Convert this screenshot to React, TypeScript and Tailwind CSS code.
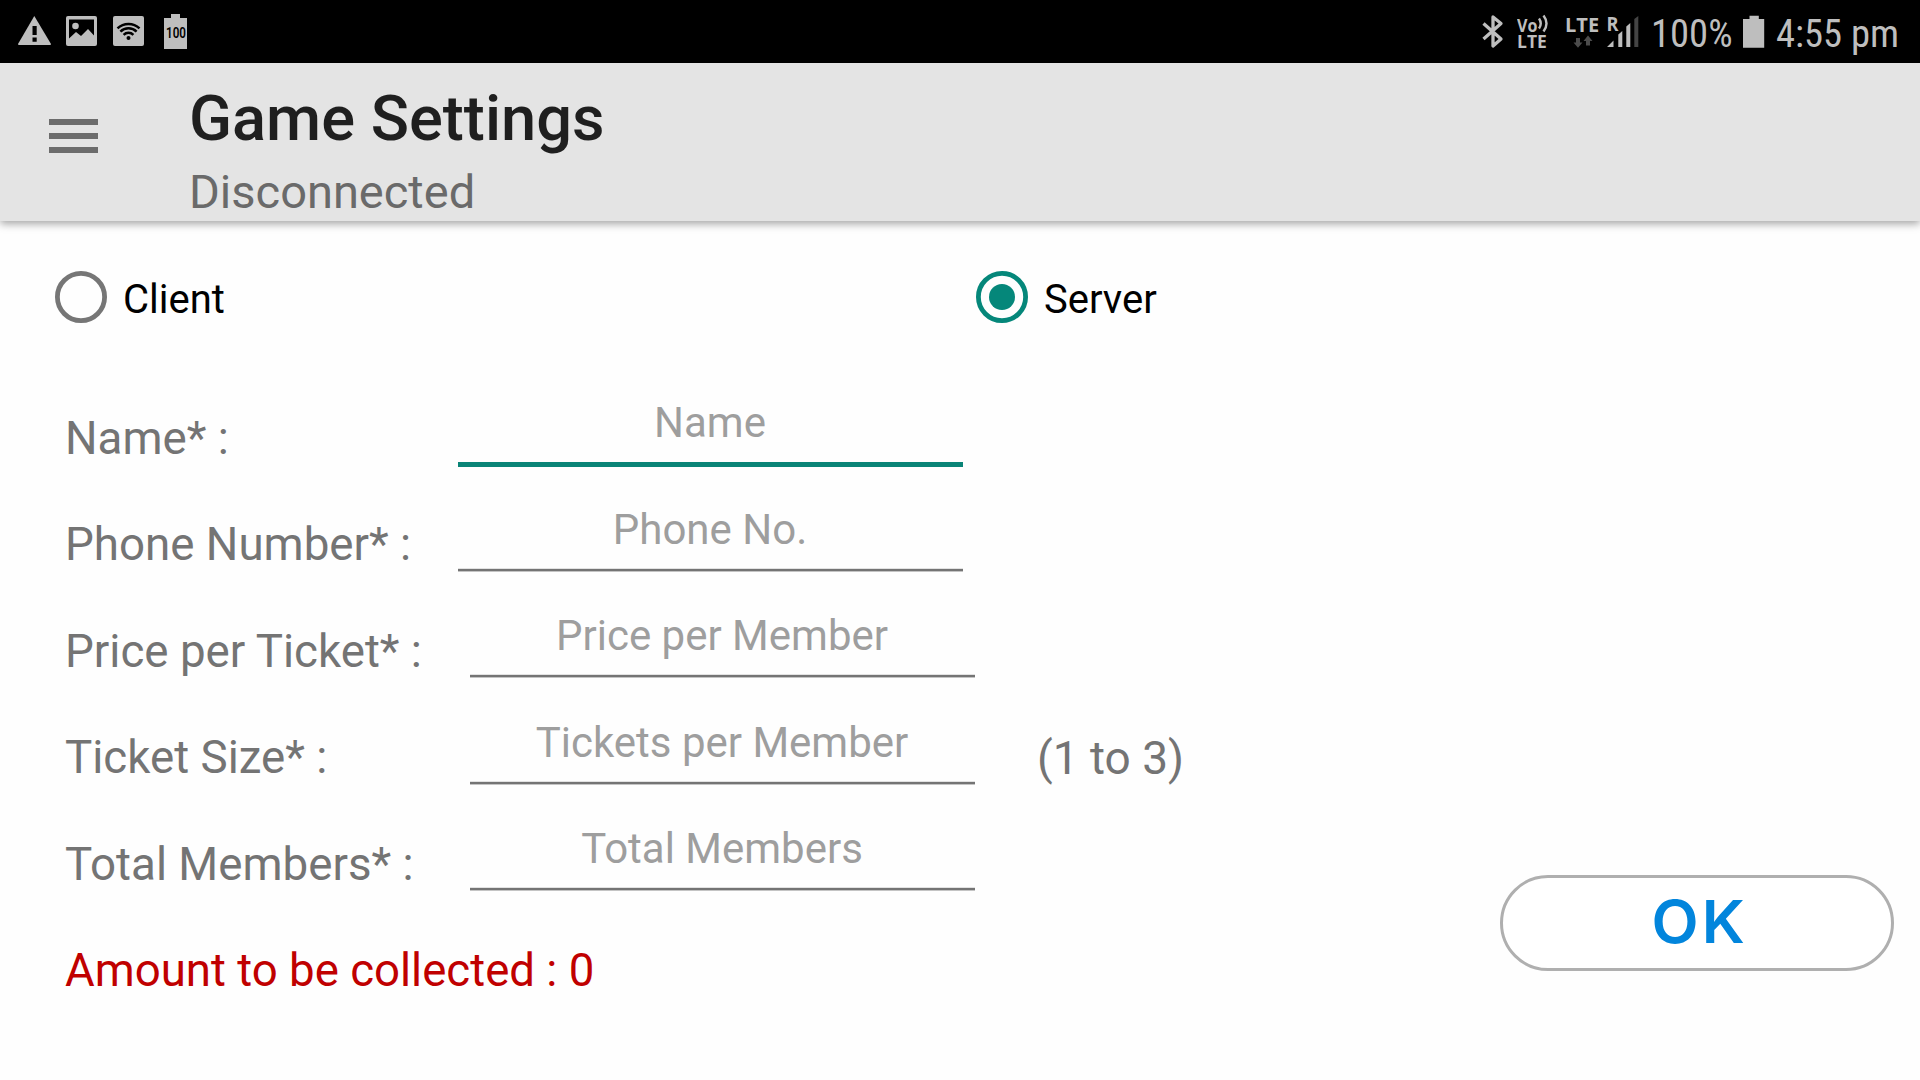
import React from "react";

type Field = {
  label: string;
  hint: string;
  row: string;
  gap: string;
  leading: string;
  active?: boolean;
  suffix?: string;
};

const fields: Field[] = [
  { label: "Name* :", hint: "Name", row: "h-[107px]", gap: "w-[393px]", leading: "leading-[108px]", active: true },
  { label: "Phone Number* :", hint: "Phone No.", row: "h-[106px]", gap: "w-[393px]", leading: "leading-[106px]" },
  { label: "Price per Ticket* :", hint: "Price per Member", row: "h-[107px]", gap: "w-[405px]", leading: "leading-[108px]" },
  { label: "Ticket Size* :", hint: "Tickets per Member", row: "h-[106px]", gap: "w-[405px]", leading: "leading-[106px]", suffix: "(1 to 3)" },
  { label: "Total Members* :", hint: "Total Members", row: "h-[107px]", gap: "w-[405px]", leading: "leading-[108px]" },
];

function StatusBar() {
  return (
    <div className="flex h-[63px] justify-between bg-black text-[#bebebe]">
      <div className="flex pl-[17px]">
        <svg width="36" height="63" viewBox="0 0 36 63" fill="#bebebe">
          <path d="M17.3 16 L34 44 Q34 45 33 45 H2 Q1 45 1 44 Z" />
          <path d="M15.500 26h4.200v9h-4.200zM15.500 37.600h4.200v4.200h-4.200z" fill="#000" />
        </svg>
        <svg className="ml-[13px]" width="32" height="63" viewBox="0 0 32 63">
          <rect x="0" y="16" width="31" height="30" rx="2" fill="#bebebe" />
          <path d="M3 19.500h25v16l-6-6.500-7 7-5-4-7 6.500z" fill="#000" />
          <circle cx="9.500" cy="26" r="3.300" fill="#bebebe" />
        </svg>
        <svg className="ml-[15px]" width="32" height="63" viewBox="0 0 32 63">
          <rect x="0" y="16" width="31" height="30" rx="2" fill="#bebebe" />
          <g fill="none" stroke="#000" strokeWidth="2.500">
            <path d="M4.500 28.300a16 16 0 0 1 22 0" />
            <path d="M7.400 31.600a11.500 11.500 0 0 1 16.200 0" />
            <path d="M10.600 34.800a7 7 0 0 1 9.800 0" />
          </g>
          <circle cx="15.500" cy="38" r="2" fill="#000" />
        </svg>
        <div className="mt-[14px] ml-[19px] flex h-[35px] w-[23px] flex-col items-center">
          <div className="h-[4px] w-[9px] bg-[#bebebe]" />
          <div className="flex h-[31px] w-[23px] items-center justify-center bg-[#bebebe]">
            <span className="origin-center scale-x-[.83] text-[14px] leading-[31px] font-semibold text-black">100</span>
          </div>
        </div>
      </div>

      <div className="flex">
        <svg width="22" height="63" viewBox="0 0 22 63" fill="none" stroke="#bebebe" strokeWidth="3.300" strokeLinejoin="round">
          <path d="M1.500 23.500 L19 39 L11 46 V17 L19 23.500 L1.500 39" />
        </svg>
        <div className="ml-[13px] flex w-[37px] flex-col pt-[14px] font-['Open_Sans']">
          <div className="flex h-[18px]">
            <div className="w-[21px]">
              <span className="inline-block origin-left scale-x-[.87] text-[18.500px] leading-[18px] font-bold">Vo</span>
            </div>
            <svg width="12" height="19" viewBox="0 0 12 19" fill="none" stroke="#bebebe" strokeWidth="2.400">
              <path d="M1 4.500q3.500 5 0 10M5.500 1.500q6 8 0 16" />
            </svg>
          </div>
          <span className="text-[17.500px] leading-[18px] font-bold">LTE</span>
        </div>
        <div className="ml-[11px] flex w-[36px] flex-col pt-[15px]">
          <span className="font-['Open_Sans'] text-[20px] leading-[19px] font-bold">LTE</span>
          <svg className="mt-[1px] ml-[8px]" width="20" height="13" viewBox="0 0 20 13" fill="#4c4c4c">
            <path d="M3 3h4v4.500h2.500l-4.500 5.200-4.500-5.200H3zM13 10.500h4V6h2.500l-4.500-5.500-4.500 5.500H13z" />
          </svg>
        </div>
        <svg className="ml-[6px]" width="33" height="63" viewBox="0 0 33 63" fill="#bebebe">
          <path d="M0 47 L6.500 40.500 V47zM11.300 34.500l4-3.500v16h-4zM19.300 26.500l4-3.500v24h-4z" />
          <path d="M27.300 19l4-3v31h-4z" fill="#444" />
          <text x="-0.500" y="31" fontFamily="Open Sans" fontSize="19" fontWeight="700" textLength="12" lengthAdjust="spacingAndGlyphs">R</text>
        </svg>
        <span className="ml-[11px] w-[84px] pt-[5px] text-[38.600px] leading-[57px] whitespace-nowrap font-stretch-[75%]">100%</span>
        <svg className="ml-[8px]" width="22" height="63" viewBox="0 0 22 63" fill="#bebebe">
          <path d="M6.500 15.700h9.300V19h5.400v28.800H0V19h6.500z" />
        </svg>
        <span className="ml-[11px] w-[144px] pt-[5px] text-[38.600px] leading-[57px] whitespace-nowrap font-stretch-[75%]">4:55 pm</span>
      </div>
    </div>
  );
}

function Header() {
  return (
    <header className="z-10 flex h-[158px] bg-[#e4e4e4] shadow-[0_3px_8px_rgba(0,0,0,0.35)]">
      <div className="flex w-[189px] flex-col gap-[8px] pt-[56px] pl-[49px]">
        <div className="h-[6px] w-[49px] bg-[#6c6c6c]" />
        <div className="h-[6px] w-[49px] bg-[#6c6c6c]" />
        <div className="h-[6px] w-[49px] bg-[#6c6c6c]" />
      </div>
      <div className="flex flex-col pt-[18px]">
        <h1 className="text-[63.200px] leading-[74px] font-medium text-[#1f1f1f]">Game Settings</h1>
        <p className="mt-[9px] text-[47px] leading-[55px] text-[#6a6a6a]">Disconnected</p>
      </div>
    </header>
  );
}

function Radio({ label, checked }: { label: string; checked?: boolean }) {
  return (
    <div className="flex w-[921px] items-center">
      <svg width="52" height="52" viewBox="0 0 52 52" fill="none">
        <circle cx="26" cy="26" r="23.600" stroke={checked ? "#05877a" : "#767676"} strokeWidth="4.800" />
        {checked && <circle cx="26" cy="26" r="13" fill="#05877a" />}
      </svg>
      <span className="mt-[6px] ml-[16px] text-[40px] leading-[48px] text-black">{label}</span>
    </div>
  );
}

function FormRow({ label, hint, row, gap, leading, active, suffix }: Field) {
  return (
    <div className={`flex ${row}`}>
      <label className={`${gap} ${leading} text-[45.700px] text-[#747474]`}>{label}</label>
      <div className="flex w-[505px] flex-col pt-[14px]">
        <span className="h-[48px] pr-[1px] text-center text-[42px] leading-[48px] text-[#9e9e9e]">{hint}</span>
        {active ? (
          <div className="mt-[15px] h-[5px] bg-[#0a8477]" />
        ) : (
          <div className="mt-[15px] h-[2px] bg-[#747474] shadow-[0_1px_0_#c4c4c4,0_-1px_0_#e2e2e2]" />
        )}
      </div>
      {suffix && <span className={`${leading} ml-[62px] text-[46px] text-[#747474]`}>{suffix}</span>}
    </div>
  );
}

export default function App() {
  return (
    <div className="flex h-[1080px] w-[1920px] flex-col overflow-hidden bg-[#fefefe] font-[Roboto,sans-serif]">
      <StatusBar />
      <Header />
      <div className="flex h-[164px] pt-[50px] pl-[55px]">
        <div className="flex h-[52px]">
          <Radio label="Client" />
          <Radio label="Server" checked />
        </div>
      </div>
      <main className="flex flex-1 justify-between">
        <div className="flex flex-col pl-[65px]">
          {fields.map((f) => (
            <FormRow key={f.label} {...f} />
          ))}
          <p className="text-[45.600px] leading-[106px] text-[#c00000]">Amount to be collected : 0</p>
        </div>
        <button className="mt-[490px] mr-[26px] flex h-[96px] w-[394px] items-center justify-center rounded-full border-[3px] border-[#afafaf] bg-white pb-[4px] pl-[6px] text-[#0285dc]">
          <span className="scale-x-[1.03] font-[Inter] text-[59.500px] leading-[60px] font-[560] tracking-[3px]">OK</span>
        </button>
      </main>
    </div>
  );
}
